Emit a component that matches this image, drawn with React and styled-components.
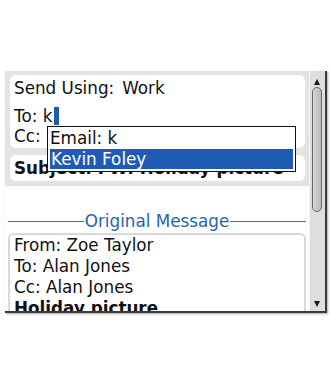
import styled, { createGlobalStyle } from 'styled-components';

const GlobalStyle = createGlobalStyle`
  body {
    margin: 0;
    background: #fff;
    font-family: "DejaVu Sans", "Noto Sans", sans-serif;
  }
`;

const Page = styled.div`
  width: 330px;
  height: 385px;
  padding: 71px 0 0 5px;
  box-sizing: border-box;
`;

const Screen = styled.div`
  position: relative;
  display: flex;
  width: 320px;
  height: 240px;
  border-right: 2px solid #3a3a3a;
  border-bottom: 2px solid #3a3a3a;
  box-shadow: 1px 1px 2px rgba(0, 0, 0, 0.35);
  overflow: hidden;
  color: #111;
  font-size: 16.8px;
`;

const Main = styled.div`
  width: 304px;
  display: flex;
  flex-direction: column;
`;

const HeaderFrame = styled.div`
  background: #e3e3e3;
  padding: 4px 4px 5px 5px;
  display: flex;
  flex-direction: column;
  gap: 7px;
`;

const Card = styled.div`
  background: #fff;
  border-radius: 6px;
  padding: ${(p) => p.$pad || '3px 5px'};
  display: flex;
  flex-direction: column;
`;

const Row = styled.div`
  height: 20px;
  line-height: 20px;
  white-space: nowrap;
  display: flex;
  align-items: center;
  gap: ${(p) => p.$gap || '0'};
  margin-top: ${(p) => p.$top || '0'};
  font-weight: ${(p) => (p.$bold ? 700 : 400)};
`;

const Cursor = styled.span`
  display: inline-block;
  width: 5px;
  height: 18px;
  margin-left: 2px;
  background: #1f5bb5;
`;

const Separator = styled.div`
  margin: 25px 3px 2px;
  height: 20px;
  display: flex;
  align-items: center;
  gap: 1px;
  color: #2a63ad;

  &::before,
  &::after {
    content: '';
    flex: 1;
    height: 1px;
    background: #3a72b4;
  }
`;

const OriginalCard = styled.div`
  margin: 0 3px;
  border: 2px solid #d9d9d9;
  border-bottom: none;
  border-radius: 6px 6px 0 0;
  padding: 0 4px;
  flex: 1;
`;

const Line = styled.div`
  height: 21px;
  line-height: 21px;
  white-space: nowrap;
  font-weight: ${(p) => (p.$bold ? 700 : 400)};
`;

const Scrollbar = styled.div`
  position: relative;
  width: 16px;
  background: #dedede;
  border-left: 1px solid #f3f3f3;
  box-sizing: border-box;
`;

const Arrow = styled.div`
  position: absolute;
  left: 4px;
  top: ${(p) => p.$top};
  width: 0;
  height: 0;
  border-left: 3.5px solid transparent;
  border-right: 3.5px solid transparent;
  ${(p) =>
    p.$down
      ? 'border-top: 6px solid #1a1a1a;'
      : 'border-bottom: 6px solid #1a1a1a;'}
`;

const Thumb = styled.div`
  position: absolute;
  left: 2px;
  top: 16px;
  width: 10px;
  height: 125px;
  box-sizing: border-box;
  border: 1px solid #666;
  border-radius: 5px;
  background: linear-gradient(to right, #d6d6d6, #b9b9b9);
`;

const Popup = styled.div`
  position: absolute;
  left: 42px;
  top: 55px;
  width: 249px;
  box-sizing: border-box;
  border: 1px solid #111;
  background: #fff;
  padding: 1px 2px 2px 1px;
`;

const Option = styled.div`
  height: ${(p) => (p.$selected ? '20px' : '21px')};
  line-height: ${(p) => (p.$selected ? '20px' : '21px')};
  padding: 0 1px;
  margin-left: ${(p) => (p.$selected ? '1px' : '0')};
  background: ${(p) => (p.$selected ? '#1f5bb5' : '#fff')};
  color: ${(p) => (p.$selected ? '#fff' : '#111')};
  white-space: nowrap;
`;

export default function App() {
  return (
    <Page>
      <GlobalStyle />
      <Screen>
        <Main>
          <HeaderFrame>
            <Card $pad="3px 4px 2px">
              <Row $gap="8px">
                <span>Send Using:</span>
                <span>Work</span>
              </Row>
              <Row $top="8px">
                To: k<Cursor />
              </Row>
              <Row>Cc:</Row>
            </Card>
            <Card $pad="3px 4px">
              <Row $bold>Subject: FW: Holiday picture</Row>
            </Card>
          </HeaderFrame>
          <Separator>Original Message</Separator>
          <OriginalCard>
            <Line>From: Zoe Taylor</Line>
            <Line>To: Alan Jones</Line>
            <Line>Cc: Alan Jones</Line>
            <Line $bold>Holiday picture</Line>
          </OriginalCard>
        </Main>
        <Scrollbar>
          <Arrow $top="8px" />
          <Thumb />
          <Arrow $top="230px" $down />
        </Scrollbar>
        <Popup>
          <Option>Email: k</Option>
          <Option $selected>Kevin Foley</Option>
        </Popup>
      </Screen>
    </Page>
  );
}
